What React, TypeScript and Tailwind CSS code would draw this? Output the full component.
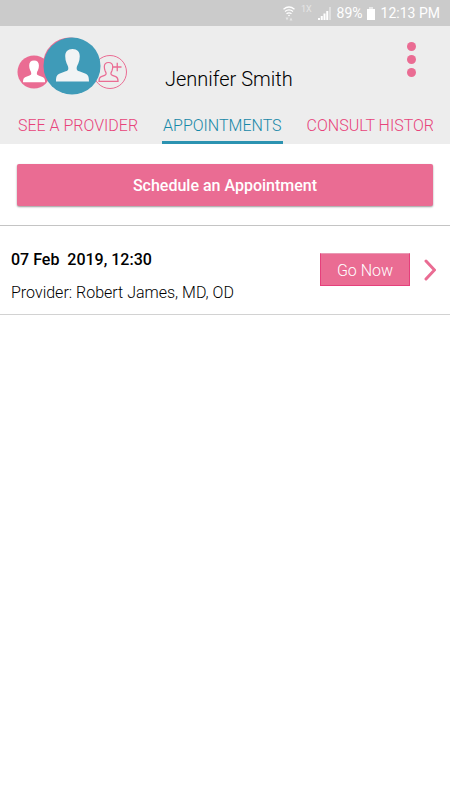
import React from 'react';

interface Appointment {
  id: number;
  date: string;
  provider: string;
}

const tabs = ['SEE A PROVIDER', 'APPOINTMENTS', 'CONSULT HISTORY'];

const appointments: Appointment[] = [
  { id: 1, date: '07 Feb  2019, 12:30', provider: 'Robert James, MD, OD' },
];

const personPath =
  'M17 0C12 0 9.500 3 9.500 7.500c0 2.500.5 5 1.500 7.500.9 2 1.700 3 1.700 5 0 1.600-.8 2.300-2.700 3l-6 2.300C1 26.500 0 28.500 0 33.500h34c0-5-1-7-4-8.200L24 23c-1.900-.7-2.700-1.400-2.700-3 0-2 .8-3 1.700-5 1-2.500 1.500-5 1.500-7.500C24.500 3 22 0 17 0z';

function StatusBar() {
  return (
    <div className="flex h-[26px] items-center justify-end bg-[#cbcbcb] pr-[10px] text-white">
      <svg className="mr-[6px] h-4 w-3" viewBox="0 0 12 16" fill="none" stroke="currentColor" strokeWidth="1.300">
        <path d="M.5 4.200Q6-.2 11.500 4.200M2 6.500Q6 3.300 10 6.500M3.500 8.800Q6 6.800 8.500 8.800" />
        <circle cx="6" cy="10.500" r=".8" fill="currentColor" stroke="none" />
        <path d="M2.500 12.500h3L4 15.500zM6.500 15.500h3L8 12.500z" fill="currentColor" stroke="none" opacity=".5" />
      </svg>
      <span className="mr-[6px] mb-2 text-[9px] leading-none text-[#e6e6e6]">1X</span>
      <svg className="mr-[6px] h-[13px] w-[13px]" viewBox="0 0 13 13" fill="currentColor">
        <path d="M0 11h2v2H0zM2.750 9h2v4h-2zM5.500 6.500h2V13h-2zM8.250 4h2v9h-2z" />
        <path d="M11 0h2v13h-2z" opacity=".4" />
      </svg>
      <span className="mr-1 text-[14px] leading-none">89%</span>
      <svg className="mr-[6px] h-[13px] w-2" viewBox="0 0 8 13" fill="currentColor">
        <path d="M0 2h8v11H0z" />
        <path d="M2 0h4v2H2z" opacity=".6" />
      </svg>
      <span className="text-[14px] leading-none">12:13 PM</span>
    </div>
  );
}

function Avatars() {
  return (
    <div className="flex items-center">
      <button type="button" aria-label="Previous patient" className="mt-3 -mr-2">
        <svg className="h-[34px] w-[34px]" viewBox="0 0 34 34">
          <circle cx="17" cy="17" r="16.500" fill="#ea6c93" />
          <path transform="translate(6 5.500) scale(.65)" d={personPath} fill="#fff" />
        </svg>
      </button>
      <button type="button" aria-label="Current patient" className="z-10">
        <svg className="h-[58px] w-[58px]" viewBox="0 0 58 58">
          <circle cx="27" cy="27.500" r="27" fill="#ea6c93" />
          <circle cx="29" cy="29" r="28.500" fill="#3f9bb8" />
          <path transform="translate(13 12) scale(.97)" d={personPath} fill="#f1f4f5" />
        </svg>
      </button>
      <button type="button" aria-label="Add patient" className="mt-3 -ml-2">
        <svg className="h-[34px] w-[34px]" viewBox="0 0 34 34" fill="none" stroke="#ea6c93">
          <circle cx="17" cy="17" r="16.500" />
          <path transform="translate(6 7.500) scale(.56)" strokeWidth="2.200" d={personPath} />
          <path d="M20 12h8.500M24.250 7.750v8.500" strokeWidth="1.300" />
        </svg>
      </button>
    </div>
  );
}

function Header() {
  return (
    <header className="bg-[#ededed] pt-[11px]">
      <div className="flex pr-[33px] pl-[17px]">
        <Avatars />
        <h1 className="mt-[30px] ml-[38px] flex-1 text-[20px] leading-6 font-light">Jennifer Smith</h1>
        <button type="button" aria-label="More options" className="flex w-[11px] flex-col items-center gap-1 self-start pt-[5px]">
          <span className="h-[9px] w-[9px] rounded-full bg-[#ea6c93]" />
          <span className="h-[9px] w-[9px] rounded-full bg-[#ea6c93]" />
          <span className="h-[9px] w-[9px] rounded-full bg-[#ea6c93]" />
        </button>
      </div>
      <nav className="mx-[17px] mt-3 flex gap-[23px] overflow-hidden">
        {tabs.map((tab) => (
          <a
            key={tab}
            href="#"
            className={
              tab === 'APPOINTMENTS'
                ? 'h-[37px] shrink-0 border-b-3 border-[#2c93b1] px-px pt-[9px] text-[16px] leading-5 font-light text-[#1688a8]'
                : 'h-[37px] shrink-0 px-px pt-[9px] text-[16px] leading-5 font-light text-[#e8437a]'
            }
          >
            {tab}
          </a>
        ))}
      </nav>
    </header>
  );
}

function AppointmentRow({ appointment }: { appointment: Appointment }) {
  return (
    <li className="flex items-start border-b border-[#d2d2d2] pr-[14px] pb-[11px] pl-[11px]">
      <div className="flex-1 pt-[22px]">
        <p className="text-[16px] leading-6 font-medium whitespace-pre">{appointment.date}</p>
        <p className="mt-[11px] text-[16px] leading-5 font-light">Provider: {appointment.provider}</p>
      </div>
      <div className="flex items-center pt-[27px]">
        <button type="button" className="h-[33px] w-[90px] border border-t-[#e99ab4] border-r-[#e63f7b] border-b-[#e63f7b] border-l-[#e63f7b] bg-[#ea6c93] pt-[2px] text-[16px] font-light text-white">
          Go Now
        </button>
        <button type="button" aria-label="Open appointment" className="ml-[14px]">
          <svg className="h-[22px] w-3" viewBox="0 0 12 22" fill="none" stroke="#ea6c93" strokeWidth="3" strokeLinecap="round">
            <path d="M2 2l8.500 9L2 20" />
          </svg>
        </button>
      </div>
    </li>
  );
}

export default function App() {
  return (
    <div className="min-h-screen bg-white font-['Roboto',sans-serif] text-black">
      <StatusBar />
      <Header />
      <main>
        <div className="border-b border-[#c4c4c4] px-[17px] pt-5 pb-[19px]">
          <button type="button" className="h-[42px] w-full rounded-xs bg-[#ea6c93] pt-[2px] text-[16px] font-medium text-white shadow-[0_1px_2px_rgba(0,0,0,0.4)]">
            Schedule an Appointment
          </button>
        </div>
        <ul>
          {appointments.map((appointment) => (
            <AppointmentRow key={appointment.id} appointment={appointment} />
          ))}
        </ul>
      </main>
    </div>
  );
}
